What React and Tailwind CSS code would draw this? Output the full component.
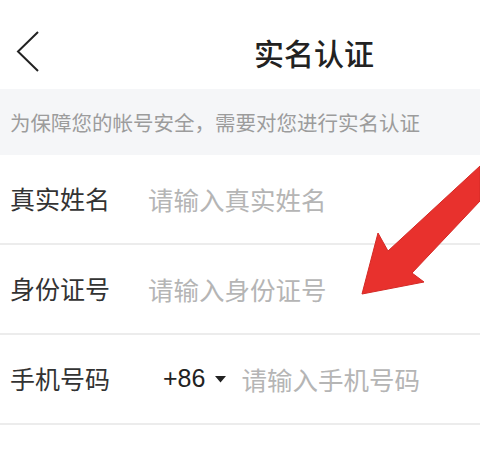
import React from 'react'

const cjk = { fontFamily: '"Noto Sans CJK SC", "Noto Sans", sans-serif' }

function Row({ label, placeholder, prefix }) {
    return (
        <div className="flex h-[90px] items-center border-b-2 border-[#ececec] pl-[10px]">
            <span className="w-[138px] shrink-0 text-[25px] text-[#333]">{label}</span>
            {prefix && (
                <div className="mr-[15px] flex shrink-0 items-center pl-[15px]">
                    <span className="text-[25px] text-[#222]" style={{ fontFamily: '"Liberation Sans", Arial, sans-serif' }}>
                        {prefix}
                    </span>
                    <svg width="11" height="7" viewBox="0 0 11 7" className="ml-[10px]">
                        <path d="M0 0h11L5.5 6.5z" fill="#222" />
                    </svg>
                </div>
            )}
            <input
                className="min-w-0 flex-1 bg-transparent text-[25.5px] text-[#333] outline-none placeholder:text-[#b5b5b5]"
                placeholder={placeholder}
                style={cjk}
            />
        </div>
    )
}

export default function App() {
    return (
        <div className="relative h-[454px] w-[480px] overflow-hidden bg-white" style={cjk}>
            <div className="flex h-[89px] items-center pl-[16px] pt-[15px]">
                <svg width="24" height="42" viewBox="0 0 24 42" fill="none">
                    <path d="M22 1L2 20.5L22 40" stroke="#222" strokeWidth="2" />
                </svg>
                <span className="ml-[214px] text-[30px] font-medium text-[#222]">实名认证</span>
            </div>
            <div className="flex h-[66px] items-center bg-[#f5f6f8] pl-[10px] text-[20.5px] text-[#9c9c9c]">
                为保障您的帐号安全，需要对您进行实名认证
            </div>
            <Row label="真实姓名" placeholder="请输入真实姓名" />
            <Row label="身份证号" placeholder="请输入身份证号" />
            <Row label="手机号码" placeholder="请输入手机号码" prefix="+86" />
            <Row label="验证码" placeholder="请输入验证码" />
            <svg className="pointer-events-none absolute left-0 top-0" width="480" height="454" viewBox="0 0 480 454">
                <path
                    d="M362 294L378 233L388 251L480 166L480 201L412 273L424 282Z"
                    fill="#e8312d"
                    stroke="#d42a26"
                    strokeWidth="1"
                    strokeLinejoin="round"
                />
            </svg>
        </div>
    )
}
